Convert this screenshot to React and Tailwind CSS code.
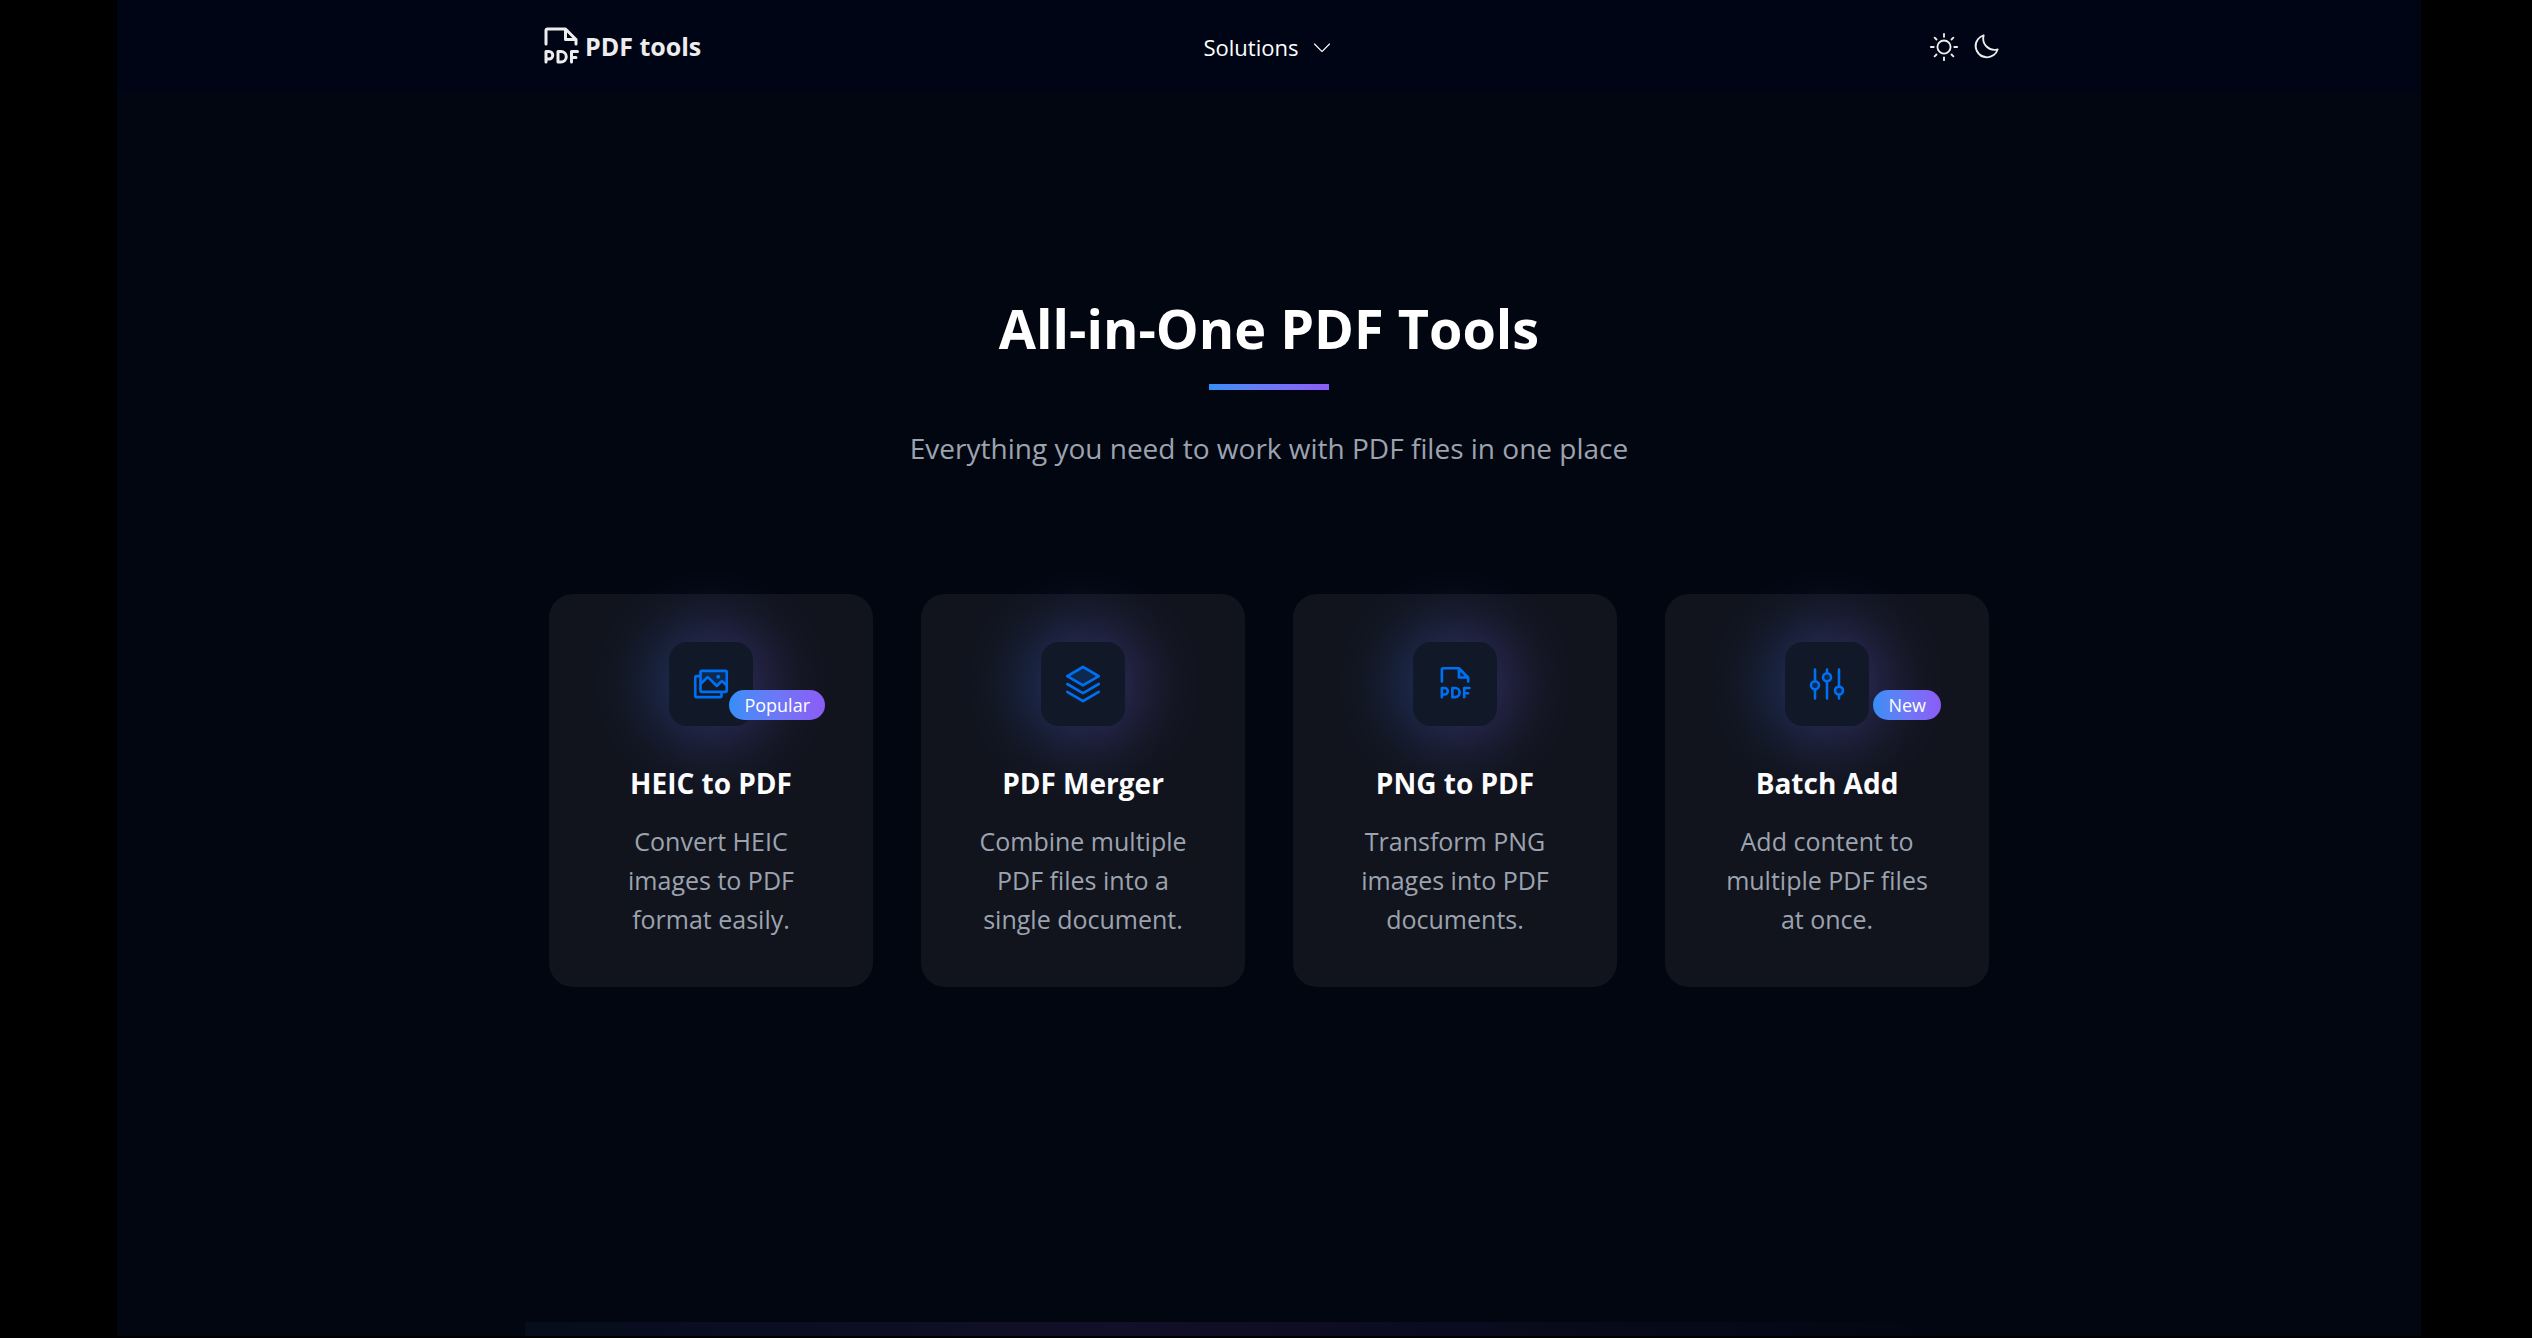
import {
  PiCaretDownLight,
  PiFilePdf,
  PiFilePdfDuotone,
  PiImagesDuotone,
  PiMoon,
  PiStackDuotone,
  PiSun,
} from "react-icons/pi";

const SlidersIcon = ({ className }) => (
  <svg viewBox="0 0 42 42" fill="none" stroke="currentColor" strokeWidth="2.6" strokeLinecap="round" className={className}>
    <path d="M9 6.5V18M9 27V35.5M21 6.5V10M21 19V35.5M33 6.5V23M33 32V35.5" />
    <g fill="currentColor" fillOpacity="0.2">
      <circle cx="9" cy="22.3" r="4" />
      <circle cx="21" cy="14.3" r="4" />
      <circle cx="33" cy="27.6" r="4" />
    </g>
  </svg>
);

const tools = [
  {
    title: "HEIC to PDF",
    description: "Convert HEIC images to PDF format easily.",
    icon: PiImagesDuotone,
    badge: "Popular",
  },
  {
    title: "PDF Merger",
    description: "Combine multiple PDF files into a single document.",
    icon: PiStackDuotone,
  },
  {
    title: "PNG to PDF",
    description: "Transform PNG images into PDF documents.",
    icon: PiFilePdfDuotone,
  },
  {
    title: "Batch Add",
    description: "Add content to multiple PDF files at once.",
    icon: SlidersIcon,
    badge: "New",
  },
];

const Header = () => (
  <header className="bg-[#000516]">
    <div className="mx-auto grid h-[94px] max-w-[1464px] grid-cols-3 items-center">
      <a href="#" className="flex items-center text-[25px] font-bold text-[#ededed]">
        <PiFilePdf className="size-12" />
        PDF tools
      </a>
      <button type="button" className="flex items-center gap-3 justify-self-center text-[22px] font-medium text-white">
        Solutions
        <PiCaretDownLight className="size-6" />
      </button>
      <div className="flex items-center gap-3 justify-self-end text-[#ededed]">
        <button type="button" aria-label="Light theme">
          <PiSun className="size-[30px]" />
        </button>
        <button type="button" aria-label="Dark theme">
          <PiMoon className="size-[30px]" />
        </button>
      </div>
    </div>
  </header>
);

const ToolCard = ({ tool }) => {
  const Icon = tool.icon;

  return (
    <a href="#" className="relative flex flex-col items-center rounded-3xl bg-[#11141d] p-12 text-center">
      <div className="relative">
        <div className="absolute -inset-5 rounded-full bg-linear-to-r from-[#0a7cf5] to-[#8b5cf6] opacity-30 blur-[32px]" />
        <div className="relative flex size-[84px] items-center justify-center rounded-[18px] bg-[#111827]">
          <Icon className="size-[42px] text-[#0070f3]" />
        </div>
      </div>
      {tool.badge && (
        <span className="absolute top-24 right-12 rounded-full bg-linear-to-r from-[#338ef7] to-[#8b5cf6] px-[15px] text-[18px] leading-[30px] font-medium text-white">
          {tool.badge}
        </span>
      )}
      <h2 className="mt-9 text-[28px] leading-[42px] font-bold whitespace-nowrap text-white">{tool.title}</h2>
      <p className="mt-[18px] text-[25px] leading-[39px] text-[#9ca3af]">{tool.description}</p>
    </a>
  );
};

export default function App() {
  return (
    <div className="flex min-h-screen flex-col bg-black pb-0.5 pl-1.5 font-['Open_Sans','Noto_Sans',sans-serif]">
      <div className="mx-auto flex w-full max-w-[2304px] grow flex-col bg-[#020610]">
        <Header />
        <main className="flex grow flex-col">
          <section className="mx-auto w-full max-w-[1440px] pt-48 text-center">
            <h1 className="text-[54px] leading-[84px] font-bold text-white">All-in-One PDF Tools</h1>
            <div className="mx-auto mt-[14px] h-1.5 w-[120px] bg-linear-to-r from-[#338ef7] to-[#8b5cf6]" />
            <p className="mt-[34px] text-[28px] leading-[48px] text-[#9ca3af]">
              Everything you need to work with PDF files in one place
            </p>
            <div className="mt-[122px] grid grid-cols-4 gap-12">
              {tools.map((tool) => (
                <ToolCard key={tool.title} tool={tool} />
              ))}
            </div>
          </section>
          <div className="mx-auto mt-auto h-3.5 w-full max-w-[1488px] bg-linear-to-r from-[#050d1c] via-[#120f28] via-40% to-[#020610]" />
        </main>
      </div>
    </div>
  );
}
